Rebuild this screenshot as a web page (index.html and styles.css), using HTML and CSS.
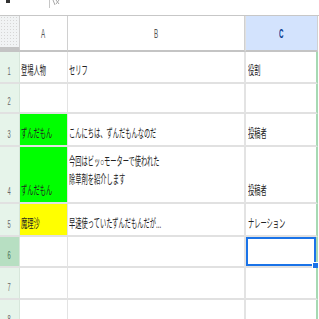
FILE: index.html
```html
<!DOCTYPE html>
<html lang="ja">
<head>
  <meta charset="UTF-8">
  <title>Sheet</title>
  <link rel="stylesheet" href="styles.css">
</head>
<body>

  <!-- formula bar (cut off at the top) -->
  <div class="formula-bar">
    <span class="tick"></span>
    <span class="divider"></span>
    <svg class="fx" width="8" height="6" viewBox="0 0 8 6">
      <path d="M1 0 L3 5 M4 0 L7 4 M7 0 L4 4" stroke="#a8a8a8" stroke-width="1" fill="none"/>
    </svg>
  </div>

  <div class="sheet">
    <!-- header row -->
    <div class="corner"></div>
    <div class="col-head"><span class="t">A</span></div>
    <div class="col-head"><span class="t">B</span></div>
    <div class="col-head active"><span class="t">C</span></div>

    <!-- row 1 -->
    <div class="row-head"><span class="t">1</span></div>
    <div class="cell"><span class="t">登場人物</span></div>
    <div class="cell"><span class="t">セリフ</span></div>
    <div class="cell last"><span class="t">役割</span></div>

    <!-- row 2 -->
    <div class="row-head"><span class="t">2</span></div>
    <div class="cell"></div>
    <div class="cell"></div>
    <div class="cell last"></div>

    <!-- row 3 -->
    <div class="row-head"><span class="t">3</span></div>
    <div class="cell green"><span class="t">ずんだもん</span></div>
    <div class="cell"><span class="t">こんにちは、ずんだもんなのだ</span></div>
    <div class="cell last"><span class="t">投稿者</span></div>

    <!-- row 4 -->
    <div class="row-head"><span class="t">4</span></div>
    <div class="cell green"><span class="t">ずんだもん</span></div>
    <div class="cell wrap">
      <span class="t">今回はビッ○モーターで使われた</span>
      <span class="t">除草剤を紹介します</span>
    </div>
    <div class="cell last"><span class="t">投稿者</span></div>

    <!-- row 5 -->
    <div class="row-head"><span class="t">5</span></div>
    <div class="cell yellow"><span class="t">魔理沙</span></div>
    <div class="cell"><span class="t">早速使っていたずんだもんだが...</span></div>
    <div class="cell last"><span class="t">ナレーション</span></div>

    <!-- row 6 -->
    <div class="row-head current"><span class="t">6</span></div>
    <div class="cell"></div>
    <div class="cell"></div>
    <div class="cell last selected"><span class="handle"></span></div>

    <!-- row 7 -->
    <div class="row-head"><span class="t">7</span></div>
    <div class="cell"></div>
    <div class="cell"></div>
    <div class="cell last"></div>

    <!-- row 8 -->
    <div class="row-head"><span class="t">8</span></div>
    <div class="cell"></div>
    <div class="cell"></div>
    <div class="cell last"></div>
  </div>

</body>
</html>
```

FILE: styles.css
```css
/* General Reset */
body {
  margin: 0;
  padding: 0;
  background: #fff;
  font-family: "Liberation Sans", "Noto Sans CJK JP", sans-serif;
  color: #222;
  overflow: hidden;
}

/* Formula bar, only its bottom edge shows */
.formula-bar {
  height: 15px;
  border-bottom: 1px solid #c7c7c7;
  position: relative;
}

.formula-bar .tick {
  position: absolute;
  left: 6px;
  top: 0;
  width: 4px;
  height: 3px;
  background: #333;
}

.formula-bar .divider {
  position: absolute;
  left: 49px;
  top: 0;
  width: 1px;
  height: 8px;
  background: #c7c7c7;
}

.formula-bar .fx {
  position: absolute;
  left: 52px;
  top: 0;
}

/* Grid */
.sheet {
  display: grid;
  grid-template-columns: 20px 48px 177px 73px;
  grid-template-rows: 36px 32px 30px 33px 57px 33px 31px 32px 32px;
}

/* squeeze text sideways like the capture */
.t {
  display: inline-block;
  white-space: nowrap;
  transform: scaleX(0.52);
  transform-origin: left center;
  line-height: 16px;
}

.corner {
  background-color: #f1f3f4;
  background-image: radial-gradient(#d6d6d6 0.6px, transparent 0.7px);
  background-size: 3px 3px;
  border-right: 1px solid #d0d0d0;
  border-bottom: 5px solid #c4c4c4;
}

.col-head {
  display: flex;
  align-items: center;
  justify-content: center;
  padding-top: 2px;
  border-right: 1px solid #d0d0d0;
  border-bottom: 2px solid #c4c4c4;
  font-size: 12px;
  color: #555;
  overflow: hidden;
}

.col-head .t {
  transform-origin: center;
}

.col-head.active {
  background: #d3e3fd;
  color: #0b3f91;
  font-weight: bold;
  border-left: 1px solid #e0e0e0;
}

.row-head {
  display: flex;
  align-items: flex-end;
  justify-content: center;
  padding-bottom: 3px;
  background: #e6f4ea;
  border-right: 1px solid #d7e6db;
  border-bottom: 2px solid #e1e1e1;
  font-size: 11px;
  color: #666;
}

.row-head .t {
  transform-origin: center;
}

.row-head.current {
  background: #b7dfc2;
  color: #3f6b4d;
}

.cell {
  display: flex;
  align-items: flex-end;
  padding: 0 0 3px 1px;
  border-right: 1px solid #e3e3e3;
  border-bottom: 2px solid #e1e1e1;
  font-size: 12px;
  overflow: hidden;
  position: relative;
}

.cell.last {
  padding-left: 2px;
  border-left: 1px solid #e3e3e3;
  border-right: 2px solid #a6d9b3;
}

.cell.wrap {
  flex-direction: column;
  align-items: flex-start;
  justify-content: flex-start;
  padding-top: 6px;
}

.cell.wrap .t {
  line-height: 18px;
}

.green {
  background: #00ff00;
}

.yellow {
  background: #ffff00;
}

/* Selected cell */
.selected {
  box-shadow: inset 0 0 0 2px #1a73e8;
  overflow: visible;
}

.handle {
  position: absolute;
  right: -3px;
  bottom: -3px;
  width: 5px;
  height: 5px;
  background: #1a73e8;
  border: 1px solid #fff;
}
```
